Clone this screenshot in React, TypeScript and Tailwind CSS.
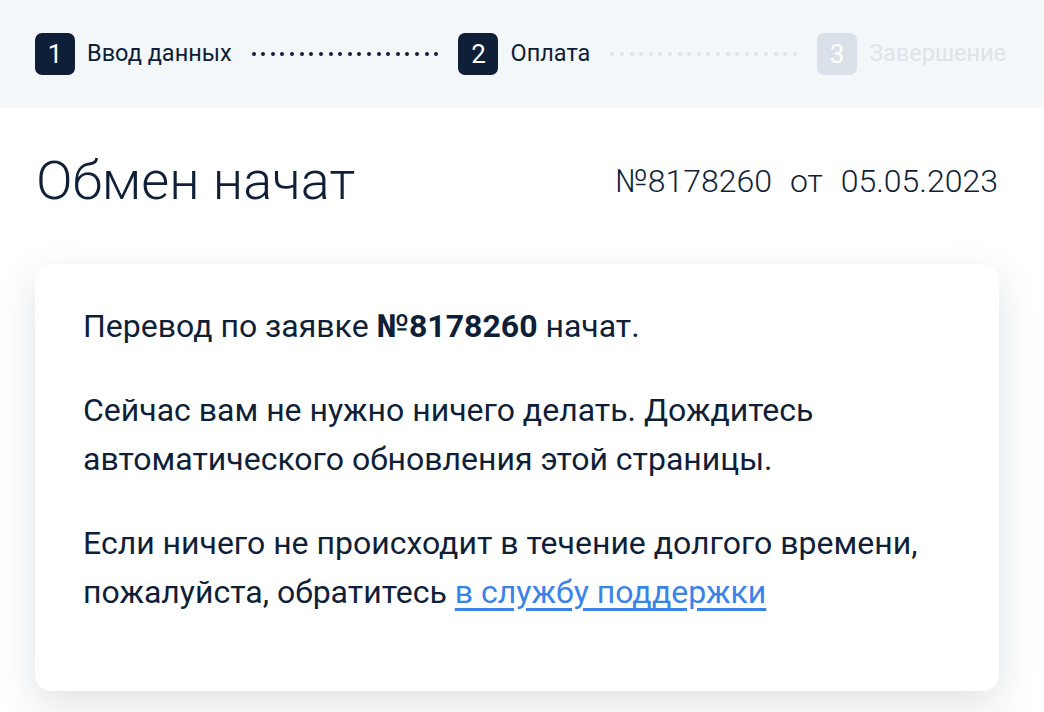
import React from "react";

const font = { fontFamily: "Roboto, 'Noto Sans', sans-serif" };

function Dots({ active }: { active: boolean }) {
  return (
    <div className="flex-1 flex justify-between items-center mx-[20px]">
      {Array.from({ length: 20 }).map((_, i) => (
        <span
          key={i}
          className={
            "block w-[4px] h-[4px] rounded-full " +
            (active ? "bg-[#0f1f38]" : "bg-[#dde3ea]")
          }
        />
      ))}
    </div>
  );
}

function Step({ n, label, state }: { n: number; label: string; state: "done" | "todo" }) {
  const dark = state === "done";
  return (
    <div className="flex items-center gap-[12px] shrink-0">
      <div
        className={
          "w-[40px] h-[42px] rounded-[7px] flex items-center justify-center text-[26px] leading-none " +
          (dark ? "bg-[#0f1f38] text-white" : "bg-[#dbe1e8] text-white")
        }
      >
        {n}
      </div>
      <span className={"text-[23.5px] " + (dark ? "text-[#0f1f38]" : "text-[#dde3ea]")}>{label}</span>
    </div>
  );
}

export default function App() {
  return (
    <div style={font} className="w-[1044px] h-[712px] bg-white overflow-hidden text-[#0f1f38]">
      <div className="bg-[#f4f7fa] h-[108px] px-[35px] flex items-center">
        <div className="flex items-center w-[971px]">
          <Step n={1} label="Ввод данных" state="done" />
          <Dots active />
          <Step n={2} label="Оплата" state="done" />
          <Dots active={false} />
          <Step n={3} label="Завершение" state="todo" />
        </div>
      </div>
      <div className="pl-[35px] w-[999px]">
        <div className="flex items-center justify-between pt-[37px] pb-[47px]">
          <h1 className="text-[54px] font-light leading-[72px] ml-[1px]">Обмен начат</h1>
          <div className="text-[32px] font-light flex gap-[18px] mr-[1px] leading-[72px]">
            <span>№8178260</span>
            <span>от</span>
            <span>05.05.2023</span>
          </div>
        </div>
        <div className="rounded-[16px] bg-white shadow-[0_14px_40px_rgba(15,31,56,0.13)] pl-[48px] pr-[30px] pt-[38px] pb-[74px]">
          <p className="text-[32px] leading-[49px] mb-[35px]">
            Перевод по заявке <b className="font-bold">№8178260</b> начат.
          </p>
          <p className="text-[32px] leading-[49px] mb-[35px]">
            Сейчас вам не нужно ничего делать. Дождитесь
            <br />
            автоматического обновления этой страницы.
          </p>
          <p className="text-[32px] leading-[49px]">
            Если ничего не происходит в течение долгого времени,
            <br />
            пожалуйста, обратитесь{" "}
            <a href="#" className="text-[#3a83e8] underline underline-offset-[5px]">
              в службу поддержки
            </a>
          </p>
        </div>
      </div>
    </div>
  );
}
